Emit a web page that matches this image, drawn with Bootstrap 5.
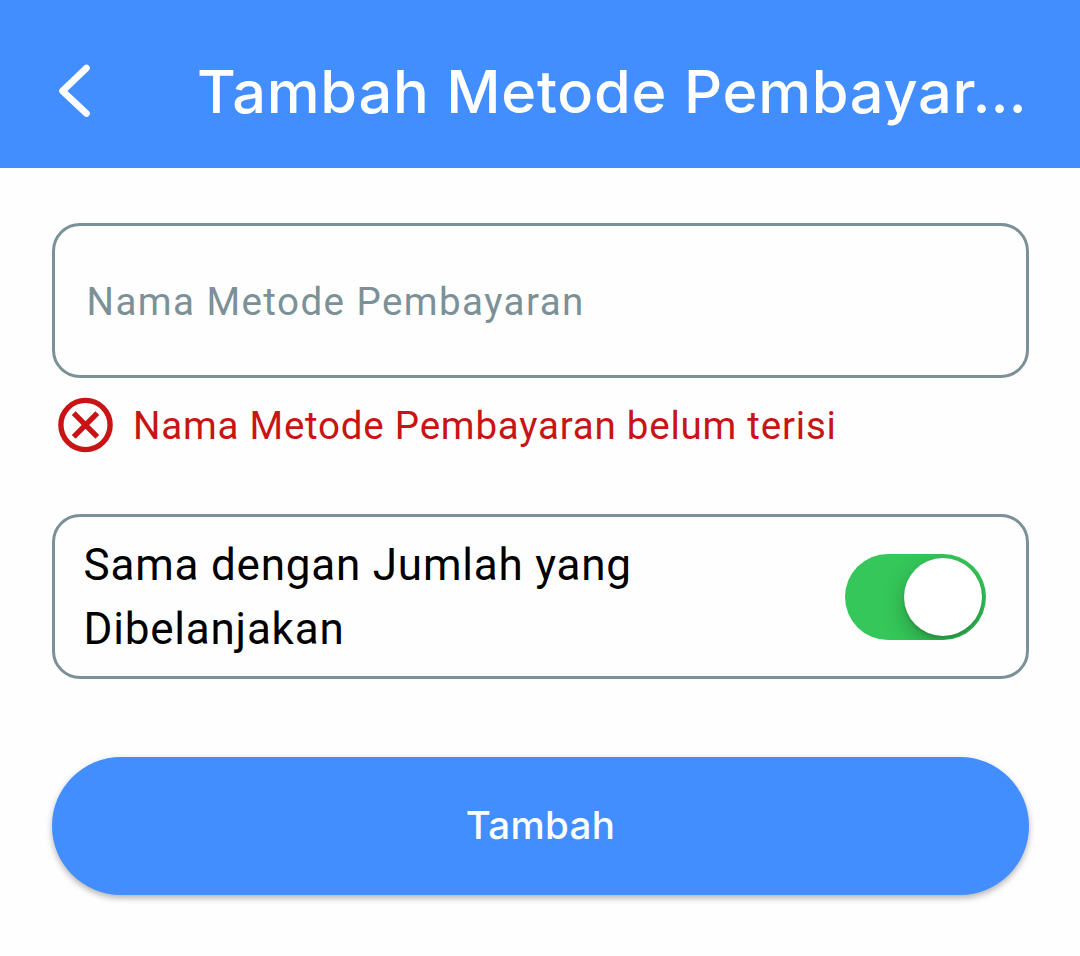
<!DOCTYPE html>
<html lang="id">
<head>
<meta charset="utf-8">
<meta name="viewport" content="width=device-width, initial-scale=1">
<title>Tambah Metode Pembayaran</title>
<link href="https://cdn.jsdelivr.net/npm/bootstrap@5.3.0/dist/css/bootstrap.min.css" rel="stylesheet">
<style>
  body { font-family: Roboto, "Liberation Sans", sans-serif; background: #fefefe; min-height: 956px; overflow: hidden; }
  .app-bar { height: 168px; background: #428eff; padding: 14px 50px 0 52px; }
  .back-btn { width: 145px; flex: none; line-height: 0; }
  .app-title { font-family: Inter, Roboto, sans-serif; font-size: 59.5px; font-weight: 450; letter-spacing: .75px; line-height: 76px; }
  .form-area { padding: 55px 51px 0 52px; }
  .name-input, .name-input:focus { height: 155px; border: 3px solid #7b9197; border-radius: 28px; padding: 2px 32px 0 31.5px; font-size: 38.5px; letter-spacing: 1.45px; background: #fefefe; box-shadow: none; }
  .name-input::placeholder { color: #7b9197; opacity: 1; }
  .error-msg { margin-top: 19px; padding-left: 6px; gap: 19px; color: #c81414; font-size: 38.5px; letter-spacing: .775px; height: 56px; line-height: 56px; }
  .error-msg span { padding-top: 2px; }
  .switch-box { margin-top: 61px; height: 165px; border: 3px solid #7b9197; border-radius: 28px; padding: 0 40px 0 28.5px; }
  .switch-text { font-size: 44px; line-height: 64px; letter-spacing: .79px; color: #000; width: 600px; }
  .toggle { width: 141px; height: 86px; background: #35c759; border-radius: 43px; padding: 4px; overflow: hidden; }
  .toggle-knob { width: 78px; height: 78px; background: #fff; border-radius: 50%; box-shadow: 0 8px 22px rgba(0,0,0,.25), 0 3px 3px rgba(0,0,0,.12); }
  .submit-btn, .submit-btn:hover { margin-top: 78px; height: 138px; background: #428eff; color: #fff; border: 0; font-family: Inter, Roboto, sans-serif; font-size: 38.5px; font-weight: 500; letter-spacing: .35px; box-shadow: 0 3px 6px rgba(0,0,0,.3); }
</style>
</head>
<body>
<header class="app-bar d-flex align-items-center">
  <a href="#" class="back-btn" aria-label="Kembali">
    <svg width="44" height="60" viewBox="0 0 44 60" fill="none"><path d="M34.5 7 10.5 30 34.5 52.5" stroke="#fff" stroke-width="6.6" stroke-linecap="round" stroke-linejoin="round"/></svg>
  </a>
  <h1 class="app-title text-white text-nowrap mb-0">Tambah Metode Pembayar…</h1>
</header>
<main class="form-area">
  <input class="form-control name-input" type="text" placeholder="Nama Metode Pembayaran">
  <div class="error-msg d-flex align-items-center">
    <svg class="flex-shrink-0" width="56" height="56" viewBox="0 0 56 56" fill="none" stroke="#c81414"><circle cx="27.5" cy="28" r="24.6" stroke-width="5.4"/><path d="M15.7 16.2 39.3 39.8M39.3 16.2 15.7 39.8" stroke-width="5.4"/></svg>
    <span class="text-nowrap">Nama Metode Pembayaran belum terisi</span>
  </div>
  <div class="switch-box d-flex align-items-center justify-content-between">
    <span class="switch-text">Sama dengan Jumlah yang Dibelanjakan</span>
    <div class="toggle d-flex justify-content-end" role="switch" aria-checked="true"><div class="toggle-knob"></div></div>
  </div>
  <button type="button" class="btn submit-btn w-100 rounded-pill">Tambah</button>
</main>
<script src="https://cdn.jsdelivr.net/npm/bootstrap@5.3.0/dist/js/bootstrap.bundle.min.js"></script>
</body>
</html>
